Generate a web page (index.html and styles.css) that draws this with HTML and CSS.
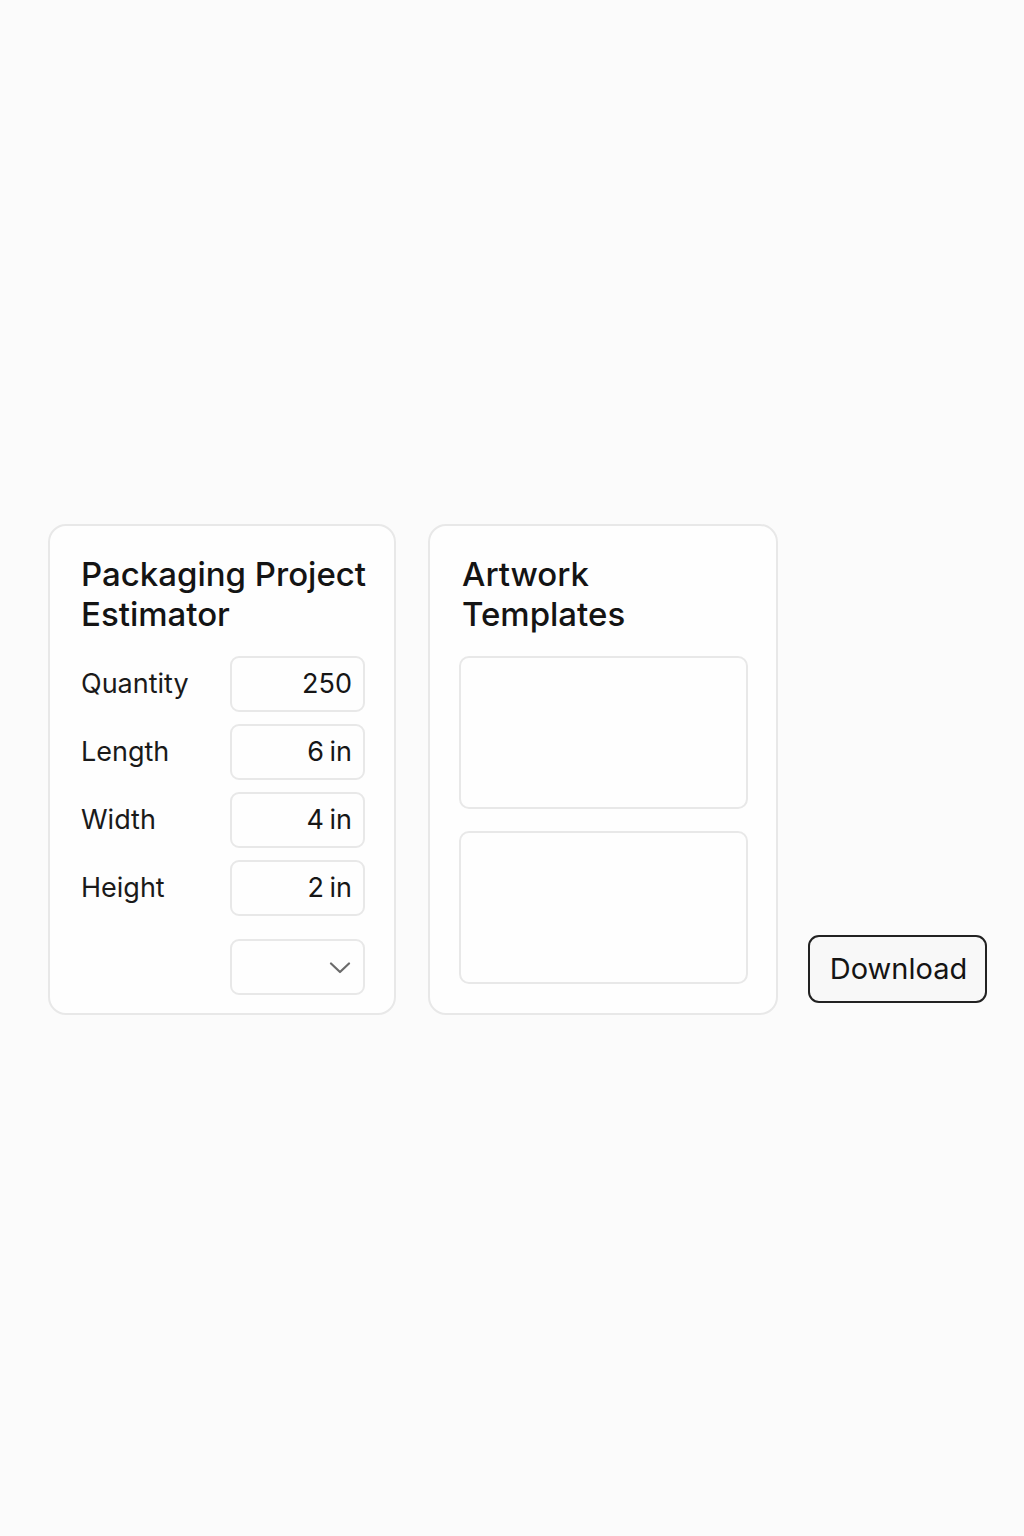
FILE: index.html
```html
<!DOCTYPE html>
<html lang="en">
<head>
<meta charset="utf-8">
<title>Packaging Project Estimator</title>
<link rel="stylesheet" href="styles.css">
</head>
<body>
<main class="page">
  <div class="row">
    <section class="card estimator">
      <h1 class="title">Packaging Project<br>Estimator</h1>
      <div class="fields">
        <div class="field"><span class="label">Quantity</span><div class="input">250</div></div>
        <div class="field"><span class="label">Length</span><div class="input">6 in</div></div>
        <div class="field"><span class="label">Width</span><div class="input">4 in</div></div>
        <div class="field"><span class="label">Height</span><div class="input">2 in</div></div>
        <div class="field select-row"><span class="label"></span>
          <div class="input select">
            <svg class="chev" width="22" height="12" viewBox="0 0 22 12"><path d="M2 1.5 L11 10 L20 1.5" fill="none" stroke="#6b6b6b" stroke-width="2.2" stroke-linecap="round" stroke-linejoin="round"/></svg>
          </div>
        </div>
      </div>
    </section>
    <section class="card templates">
      <h2 class="title t2">Artwork<br>Templates</h2>
      <div class="tpl"></div>
      <div class="tpl"></div>
    </section>
    <button class="download">Download</button>
  </div>
</main>
</body>
</html>
```
FILE: styles.css
```css
html, body {
  margin: 0;
  padding: 0;
  background: #fbfbfb;
}
body {
  font-family: Inter, "Noto Sans", "Liberation Sans", sans-serif;
  color: #141414;
}
.page {
  height: 1536px;
  display: flex;
  align-items: center;
  padding-left: 48px;
  box-sizing: border-box;
}
.row {
  display: flex;
  align-items: flex-end;
  gap: 32px;
  margin-top: 2px;
}
.card {
  background: #fefefe;
  border: 2px solid #e8e8e8;
  border-radius: 18px;
  box-sizing: border-box;
  height: 491px;
}
.estimator {
  width: 348px;
  padding: 28px 29px 16px 31px;
}
.templates {
  width: 350px;
  padding: 28px 28px 30px 29px;
}
.title {
  margin: 0;
  font-size: 33px;
  font-weight: 500;
  line-height: 40px;
  color: #141414;
  white-space: nowrap;
}
.t2 {
  padding-left: 3px;
}
.fields {
  margin-top: 22px;
  display: flex;
  flex-direction: column;
  gap: 12px;
}
.field {
  display: flex;
  align-items: center;
  justify-content: space-between;
}
.select-row {
  margin-top: 11px;
}
.label {
  font-size: 27px;
  color: #1a1a1a;
}
.input {
  width: 135px;
  height: 56px;
  box-sizing: border-box;
  border: 2px solid #e8e8e8;
  border-radius: 9px;
  background: #fefefe;
  display: flex;
  align-items: center;
  justify-content: flex-end;
  padding-right: 11px;
  font-size: 27px;
  word-spacing: -2px;
  color: #161616;
}
.select {
  padding-right: 12px;
  padding-top: 2px;
}
.chev {
  display: block;
}
.tpl {
  margin-top: 22px;
  height: 153px;
  border: 2px solid #e8e8e8;
  border-radius: 10px;
  background: #fefefe;
  box-sizing: border-box;
}
.tpl + .tpl {
  margin-top: 22px;
}
.download {
  margin-bottom: 12px;
  margin-left: -2px;
  width: 179px;
  height: 68px;
  border: 2px solid #222;
  border-radius: 11px;
  background: #f8f8f8;
  font-family: Inter, "Noto Sans", "Liberation Sans", sans-serif;
  font-size: 29px;
  color: #141414;
  padding: 0 0 0 2px;
  cursor: pointer;
}
```
